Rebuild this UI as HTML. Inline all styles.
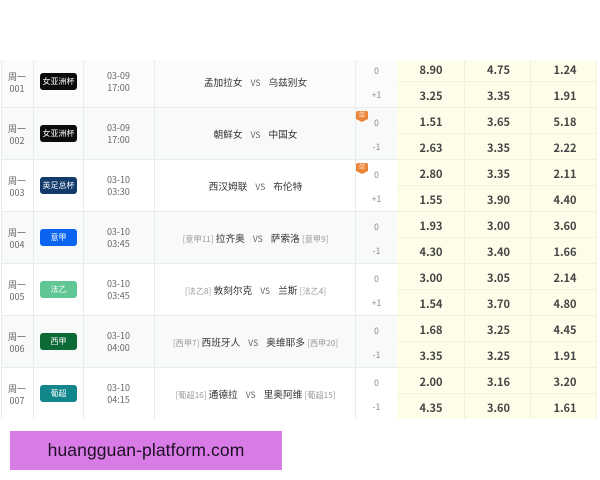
<!DOCTYPE html>
<html lang="zh">
<head>
<meta charset="utf-8">
<style>
html,body{margin:0;padding:0;background:#fff;}
body{width:600px;height:480px;position:relative;overflow:hidden;font-family:"Liberation Sans","Noto Sans CJK SC",sans-serif;}
#t{position:absolute;left:0;top:60px;width:600px;height:359px;overflow:hidden;}
.r{position:absolute;left:1px;width:596px;height:52px;border-bottom:1px solid #e9ecec;box-sizing:border-box;}
.a{background:#f8f9f9;}
.b{background:#fff;}
.r div{position:absolute;text-align:center;}
.d{left:0;width:32px;top:14px;padding-top:1px;font:9px/12px "Noto Sans CJK SC",sans-serif;color:#666;}
.l{left:39px;top:17px;width:37px;height:17px;border-radius:3px;color:#fff;font:8px/17px "Noto Sans CJK SC",sans-serif;white-space:nowrap;}
.t{left:82px;width:71px;top:14px;font:9px/12px "Noto Sans CJK SC",sans-serif;color:#666;}
.m{left:154px;width:201px;top:17px;font:9.7px/18px "Noto Sans CJK SC",sans-serif;color:#333;white-space:nowrap;}
.m i{font-style:normal;font-size:8.2px;color:#999;}
.m b{font-weight:400;font-size:8.5px;color:#666;margin:0 8px;}
.h{left:355px;width:41px;font:8.5px/12px "Noto Sans CJK SC",sans-serif;color:#888;}
.h1{top:9px;}.h2{top:33px;}
.o{background:#fdfde9;height:26px;box-sizing:border-box;border-bottom:1px solid #f1f2de;border-right:1px solid #f1f2de;font:700 11px/28px "Noto Sans CJK SC",sans-serif;color:#444;}
.x{left:396px;width:68px;text-indent:1px;}.y{left:464px;width:66px;text-indent:2px;}.z{left:530px;width:66px;text-indent:3px;}
.o1{top:0;}.o2{top:26px;}
.v{top:0;bottom:0;width:1px;background:#e9ecec;}
.f{left:355px;top:3px;width:12px;height:8px;background:#ea8438;border-radius:2px 2px 0 0;color:#ffd9bd;font:7px/8px "Noto Sans CJK SC",sans-serif;overflow:hidden;}
.f2{left:355px;top:11px;width:0;height:0;border-left:6px solid transparent;border-right:6px solid transparent;border-top:3px solid #ea8438;}
#p{position:absolute;left:10px;top:431px;width:272px;height:39px;background:#d97be6;color:#1b1024;font:17.5px/39px "Liberation Sans",sans-serif;text-align:center;letter-spacing:.1px;}
</style>
</head>
<body>
<div id="t">
<div class="r b" style="top:-4px;background:#fbfbfb">
<div class="v" style="left:0"></div><div class="v" style="left:32px"></div><div class="v" style="left:82px"></div><div class="v" style="left:153px"></div><div class="v" style="left:354px"></div>
<div class="d">周一<br>001</div><div class="l" style="background:#0b0b0b">女亚洲杯</div><div class="t">03-09<br>17:00</div>
<div class="m">孟加拉女<b>VS</b>乌兹别女</div>
<div class="h h1">0</div><div class="h h2">+1</div>
<div class="o o1 x">8.90</div><div class="o o1 y">4.75</div><div class="o o1 z">1.24</div>
<div class="o o2 x">3.25</div><div class="o o2 y">3.35</div><div class="o o2 z">1.91</div>
</div>
<div class="r a" style="top:48px">
<div class="v" style="left:0"></div><div class="v" style="left:32px"></div><div class="v" style="left:82px"></div><div class="v" style="left:153px"></div><div class="v" style="left:354px"></div>
<div class="d">周一<br>002</div><div class="l" style="background:#0b0b0b">女亚洲杯</div><div class="t">03-09<br>17:00</div>
<div class="m">朝鲜女<b>VS</b>中国女</div>
<div class="f">单</div><div class="f2"></div>
<div class="h h1">0</div><div class="h h2">-1</div>
<div class="o o1 x">1.51</div><div class="o o1 y">3.65</div><div class="o o1 z">5.18</div>
<div class="o o2 x">2.63</div><div class="o o2 y">3.35</div><div class="o o2 z">2.22</div>
</div>
<div class="r b" style="top:100px">
<div class="v" style="left:0"></div><div class="v" style="left:32px"></div><div class="v" style="left:82px"></div><div class="v" style="left:153px"></div><div class="v" style="left:354px"></div>
<div class="d">周一<br>003</div><div class="l" style="background:#123a6b">英足总杯</div><div class="t">03-10<br>03:30</div>
<div class="m">西汉姆联<b>VS</b>布伦特</div>
<div class="f">单</div><div class="f2"></div>
<div class="h h1">0</div><div class="h h2">+1</div>
<div class="o o1 x">2.80</div><div class="o o1 y">3.35</div><div class="o o1 z">2.11</div>
<div class="o o2 x">1.55</div><div class="o o2 y">3.90</div><div class="o o2 z">4.40</div>
</div>
<div class="r a" style="top:152px">
<div class="v" style="left:0"></div><div class="v" style="left:32px"></div><div class="v" style="left:82px"></div><div class="v" style="left:153px"></div><div class="v" style="left:354px"></div>
<div class="d">周一<br>004</div><div class="l" style="background:#0a64ef">意甲</div><div class="t">03-10<br>03:45</div>
<div class="m"><i>[意甲11]</i> 拉齐奥<b>VS</b>萨索洛 <i>[意甲9]</i></div>
<div class="h h1">0</div><div class="h h2">-1</div>
<div class="o o1 x">1.93</div><div class="o o1 y">3.00</div><div class="o o1 z">3.60</div>
<div class="o o2 x">4.30</div><div class="o o2 y">3.40</div><div class="o o2 z">1.66</div>
</div>
<div class="r b" style="top:204px">
<div class="v" style="left:0"></div><div class="v" style="left:32px"></div><div class="v" style="left:82px"></div><div class="v" style="left:153px"></div><div class="v" style="left:354px"></div>
<div class="d">周一<br>005</div><div class="l" style="background:#5fc694">法乙</div><div class="t">03-10<br>03:45</div>
<div class="m"><i>[法乙8]</i> 敦刻尔克<b>VS</b>兰斯 <i>[法乙4]</i></div>
<div class="h h1">0</div><div class="h h2">+1</div>
<div class="o o1 x">3.00</div><div class="o o1 y">3.05</div><div class="o o1 z">2.14</div>
<div class="o o2 x">1.54</div><div class="o o2 y">3.70</div><div class="o o2 z">4.80</div>
</div>
<div class="r a" style="top:256px">
<div class="v" style="left:0"></div><div class="v" style="left:32px"></div><div class="v" style="left:82px"></div><div class="v" style="left:153px"></div><div class="v" style="left:354px"></div>
<div class="d">周一<br>006</div><div class="l" style="background:#0b6a35">西甲</div><div class="t">03-10<br>04:00</div>
<div class="m"><i>[西甲7]</i> 西班牙人<b>VS</b>奥维耶多 <i>[西甲20]</i></div>
<div class="h h1">0</div><div class="h h2">-1</div>
<div class="o o1 x">1.68</div><div class="o o1 y">3.25</div><div class="o o1 z">4.45</div>
<div class="o o2 x">3.35</div><div class="o o2 y">3.25</div><div class="o o2 z">1.91</div>
</div>
<div class="r b" style="top:308px">
<div class="v" style="left:0"></div><div class="v" style="left:32px"></div><div class="v" style="left:82px"></div><div class="v" style="left:153px"></div><div class="v" style="left:354px"></div>
<div class="d">周一<br>007</div><div class="l" style="background:#12878b">葡超</div><div class="t">03-10<br>04:15</div>
<div class="m"><i>[葡超16]</i> 通德拉<b>VS</b>里奥阿维 <i>[葡超15]</i></div>
<div class="h h1">0</div><div class="h h2">-1</div>
<div class="o o1 x">2.00</div><div class="o o1 y">3.16</div><div class="o o1 z">3.20</div>
<div class="o o2 x">4.35</div><div class="o o2 y">3.60</div><div class="o o2 z">1.61</div>
</div>
</div>
<div id="p">huangguan-platform.com</div>
</body>
</html>
